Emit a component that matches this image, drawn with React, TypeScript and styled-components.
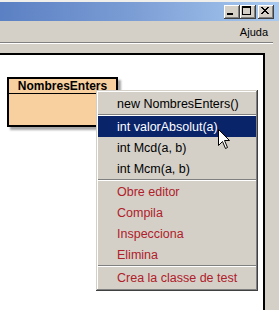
import React from "react";
import styled, { createGlobalStyle } from "styled-components";

const GlobalStyle = createGlobalStyle`
  html, body { margin: 0; padding: 0; background: #d4d0c8; }
  body { font-family: "Liberation Sans", Arial, sans-serif; }
`;

const Window = styled.div`
  position: relative;
  width: 279px;
  height: 310px;
  overflow: hidden;
  background: #d4d0c8;
  display: flex;
  flex-direction: column;
  font-family: "Liberation Sans", Arial, sans-serif;
`;

const FrameTop = styled.div`
  height: 2px;
  background: #f0efec;
  flex: none;
`;

const TitleBar = styled.div`
  height: 19px;
  flex: none;
  box-sizing: border-box;
  padding: 3px 5px 0 0;
  background: linear-gradient(to right, #5b80c3, #7d9fd6 50%, #a8caf0);
  display: flex;
  justify-content: flex-end;
  align-items: flex-start;
`;

const CaptionButton = styled.div<{ $gap?: number }>`
  width: 16px;
  height: 14px;
  box-sizing: border-box;
  margin-left: ${(p) => p.$gap ?? 0}px;
  background: #d4d0c8;
  box-shadow: inset -1px -1px #404040, inset 1px 1px #ffffff,
    inset -2px -2px #808080, inset 2px 2px #d4d0c8;
  display: flex;
  svg { display: block; }
`;

const MenuBar = styled.div`
  height: 20px;
  flex: none;
  box-sizing: border-box;
  padding: 2px 11px 0 0;
  display: flex;
  justify-content: flex-end;
  align-items: center;
  font-size: 11px;
  color: #000;
`;

const Etched = styled.div`
  flex: none;
  width: 273px;
  margin: 1px 0 9px;
  border-top: 1px solid #808080;
  border-bottom: 1px solid #ffffff;
`;

const Body = styled.div`
  flex: 1;
  display: flex;
`;

const Canvas = styled.div`
  position: relative;
  width: 263px;
  background: #ffffff;
  border-top: 2px solid #000;
  border-right: 2px solid #000;
`;

const ClassBox = styled.div`
  position: absolute;
  left: 7px;
  top: 22px;
  width: 111px;
  height: 50px;
  box-sizing: border-box;
  border: 2px solid #000;
  background: #f8cf9e;
  box-shadow: 3px 3px 2px rgba(0, 0, 0, 0.35);
`;

const ClassTitle = styled.div`
  height: 14px;
  border-bottom: 1px solid #000;
  font-size: 12px;
  font-weight: bold;
  line-height: 14px;
  text-align: center;
  color: #000;
`;

const PopupMenu = styled.div`
  position: absolute;
  left: 96px;
  top: 35px;
  width: 162px;
  box-sizing: border-box;
  padding: 3px 2px;
  background: #d4d0c8;
  box-shadow: inset -1px -1px #404040, inset 1px 1px #d4d0c8,
    inset -2px -2px #808080, inset 2px 2px #ffffff;
`;

const MenuItem = styled.div<{ $danger?: boolean; $active?: boolean }>`
  height: 21px;
  padding-left: 19px;
  display: flex;
  align-items: center;
  font-size: 12.5px;
  white-space: nowrap;
  background: ${(p) => (p.$active ? "#0a246a" : "transparent")};
  color: ${(p) => (p.$active ? "#ffffff" : p.$danger ? "#b0202a" : "#000000")};
`;

const Separator = styled.div`
  border-top: 1px solid #808080;
  border-bottom: 1px solid #ffffff;
`;

const Cursor = styled.svg`
  position: absolute;
  left: 218px;
  top: 129px;
`;

const SidePanel = styled.div`
  flex: 1;
`;

const MinGlyph = () => (
  <svg width="14" height="12" viewBox="0 0 14 12">
    <rect x="3" y="8" width="6" height="2" fill="#000" />
  </svg>
);
const MaxGlyph = () => (
  <svg width="14" height="12" viewBox="0 0 14 12">
    <rect x="2.5" y="1.5" width="8" height="8" fill="none" stroke="#000" />
    <rect x="2" y="1" width="9" height="2" fill="#000" />
  </svg>
);
const CloseGlyph = () => (
  <svg width="14" height="12" viewBox="0 0 14 12">
    <path d="M3 2 L10 9 M4 2 L11 9 M10 2 L3 9 M11 2 L4 9" stroke="#000" strokeWidth="1" />
  </svg>
);

type Item = { label: string; danger?: boolean; active?: boolean } | "sep";

const items: Item[] = [
  { label: "new NombresEnters()" },
  "sep",
  { label: "int valorAbsolut(a)", active: true },
  { label: "int Mcd(a, b)" },
  { label: "int Mcm(a, b)" },
  "sep",
  { label: "Obre editor", danger: true },
  { label: "Compila", danger: true },
  { label: "Inspecciona", danger: true },
  { label: "Elimina", danger: true },
  "sep",
  { label: "Crea la classe de test", danger: true },
];

export default function App() {
  return (
    <>
      <GlobalStyle />
      <Window>
        <FrameTop />
        <TitleBar>
          <CaptionButton>
            <MinGlyph />
          </CaptionButton>
          <CaptionButton>
            <MaxGlyph />
          </CaptionButton>
          <CaptionButton $gap={2}>
            <CloseGlyph />
          </CaptionButton>
        </TitleBar>
        <MenuBar>Ajuda</MenuBar>
        <Etched />
        <Body>
          <Canvas>
            <ClassBox>
              <ClassTitle>NombresEnters</ClassTitle>
            </ClassBox>
            <PopupMenu>
              {items.map((it, i) =>
                it === "sep" ? (
                  <Separator key={i} />
                ) : (
                  <MenuItem key={i} $danger={it.danger} $active={it.active}>
                    {it.label}
                  </MenuItem>
                )
              )}
            </PopupMenu>
          </Canvas>
          <SidePanel />
        </Body>
        <Cursor width="13" height="21" viewBox="0 0 13 21">
          <path
            d="M0.5 0.5 L0.5 16.5 L4.5 12.5 L7.5 19.5 L9.5 18.5 L6.5 11.5 L11.5 11.5 Z"
            fill="#fff"
            stroke="#000"
            strokeWidth="1"
          />
        </Cursor>
      </Window>
    </>
  );
}
